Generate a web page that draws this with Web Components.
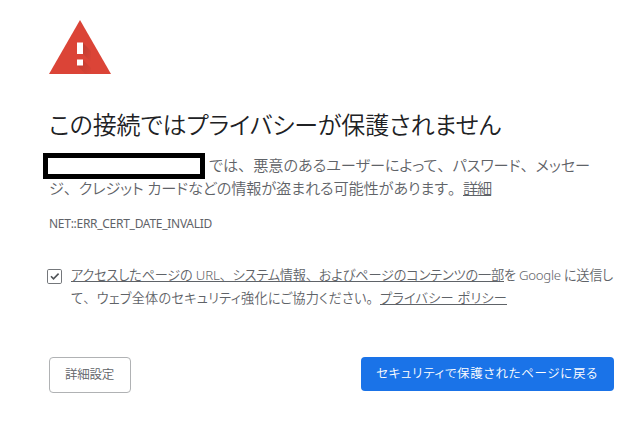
<!DOCTYPE html>
<html lang="ja">
<head>
<meta charset="utf-8">
<title>プライバシー エラー</title>
<style>
html,body{margin:0;background:#fff;height:442px;overflow:hidden}
body{font-family:"Noto Sans","Noto Sans CJK JP",sans-serif;color:#5f6368}
</style>
</head>
<body>
<privacy-interstitial></privacy-interstitial>
<script>
// A run of text whose tracking is adjusted so that it fills a given advance width.
class TextRun extends HTMLElement {
  connectedCallback() {
    const root = this.attachShadow({mode: 'open'});
    root.innerHTML = `<style>
      :host{display:inline-block;white-space:pre;font-feature-settings:"palt";flex:none}
      :host([link]) span{box-shadow:0 1px 0 0 currentColor;display:block;height:var(--link-height,17px)}
      span{display:inline-block}
    </style><span><slot></slot></span>`;
    const target = Number(this.getAttribute('measure'));
    const count = [...this.textContent].length;
    const natural = this.getBoundingClientRect().width;
    this.style.letterSpacing = (target - natural) / count + 'px';
    this.style.width = target + 'px';
  }
}
class WarningIcon extends HTMLElement {
  connectedCallback() {
    this.attachShadow({mode: 'open'}).innerHTML = `<style>:host{display:block;width:62px;height:54px}svg{display:block}</style>
    <svg width="62" height="54" viewBox="0 0 62 54">
      <defs><linearGradient id="s" x1="0" y1="0" x2="1" y2="1"><stop offset="0" stop-color="#bd3d32"/><stop offset="1" stop-color="#db4437"/></linearGradient></defs>
      <path d="M31 0 62 54H0Z" fill="#db4437"/>
      <path d="M34 23 42 31V42L34 34Z" fill="url(#s)"/><path d="M34 40 42 48V54H36.500L28 45.500Z" fill="url(#s)"/>
      <path d="M28 22.500h6V34h-6ZM28 39.500h6v6h-6Z" fill="#fff"/>
    </svg>`;
  }
}
class CheckBox extends HTMLElement {
  connectedCallback() {
    this.attachShadow({mode: 'open'}).innerHTML = `<style>:host{display:block;width:15px;height:15px}svg{display:block}</style>
    <svg width="15" height="15" viewBox="0 0 15 15" fill="none"><rect x=".5" y=".5" width="14" height="14" rx="1.3" stroke="#74777b"/><path d="M4 7.200 6.500 9.800 11.600 4.600" stroke="#505357" stroke-width="1.6"/></svg>`;
  }
}
class ActionButton extends HTMLElement {
  connectedCallback() {
    this.attachShadow({mode: 'open'}).innerHTML = `<style>
      :host{display:block}
      button{all:unset;box-sizing:border-box;display:flex;align-items:center;justify-content:center;width:82px;height:36px;padding:0 1px 1px 0;border:1px solid #b0b2b4;border-radius:4px;color:#5f6368;font-size:12.5px;font-weight:350;line-height:18px;cursor:pointer}
      :host([primary]) button{width:253px;height:34px;border:0;background:#1a73e8;color:#fff}
    </style><button><slot></slot></button>`;
  }
}
class PrivacyInterstitial extends HTMLElement {
  connectedCallback() {
    this.attachShadow({mode: 'open'}).innerHTML = `<style>
      :host{display:block;box-sizing:border-box;width:640px;height:442px;padding:20px 26px 0 49px}
      i{font-style:normal;font-feature-settings:normal}
      h1{margin:35px 0 0;height:32px;line-height:32px;font-size:24px;font-weight:350;color:#202124}
      .copy{margin-top:14px;font-size:15.2px;font-weight:350;--link-height:17px}
      .line{display:flex;height:23px;line-height:23px;align-items:center}
      .line text-run{height:23px;line-height:21px}
      .mask{box-sizing:border-box;width:162px;height:26px;border:5px solid #000;background:#fff;margin:-1px 4px 0 -6px;flex:none}
      .code{margin-top:12px;height:22px;line-height:22px;font-size:12px}
      .report{display:flex;margin:31px 0 0 -2px;gap:9px;font-size:13.2px;font-weight:350;--link-height:15px}
      .report .line text-run{line-height:18px}
      check-box{margin-top:3px}
      .actions{display:flex;justify-content:space-between;align-items:flex-start;margin-top:45px;width:565px}
    </style>
    <warning-icon></warning-icon>
    <h1><text-run measure="452">この接続ではプライバシーが保護されません</text-run></h1>
    <div class="copy">
      <div class="line"><div class="mask"></div><text-run measure="381">では<i>、</i>悪意のあるユーザーによって<i>、</i>パスワード<i>、</i>メッセー</text-run></div>
      <div class="line"><text-run measure="414">ジ<i>、</i>クレジット カードなどの情報が盗まれる可能性があります<i>。</i></text-run><text-run link measure="28">詳細</text-run></div>
    </div>
    <div class="code"><text-run measure="163">NET::ERR_CERT_DATE_INVALID</text-run></div>
    <div class="report"><check-box></check-box><div>
      <div class="line"><text-run link measure="433">アクセスしたページの URL<i>、</i>システム情報<i>、</i>およびページのコンテンツの一部</text-run><text-run measure="109">を Google に送信し</text-run></div>
      <div class="line"><text-run measure="309">て<i>、</i>ウェブ全体のセキュリティ強化にご協力ください<i>。</i></text-run><text-run link measure="127">プライバシー ポリシー</text-run></div>
    </div></div>
    <div class="actions">
      <action-button><text-run measure="49">詳細設定</text-run></action-button>
      <action-button primary><text-run measure="222">セキュリティで保護されたページに戻る</text-run></action-button>
    </div>`;
  }
}
customElements.define('text-run', TextRun);
customElements.define('warning-icon', WarningIcon);
customElements.define('check-box', CheckBox);
customElements.define('action-button', ActionButton);
customElements.define('privacy-interstitial', PrivacyInterstitial);
</script>
</body>
</html>
